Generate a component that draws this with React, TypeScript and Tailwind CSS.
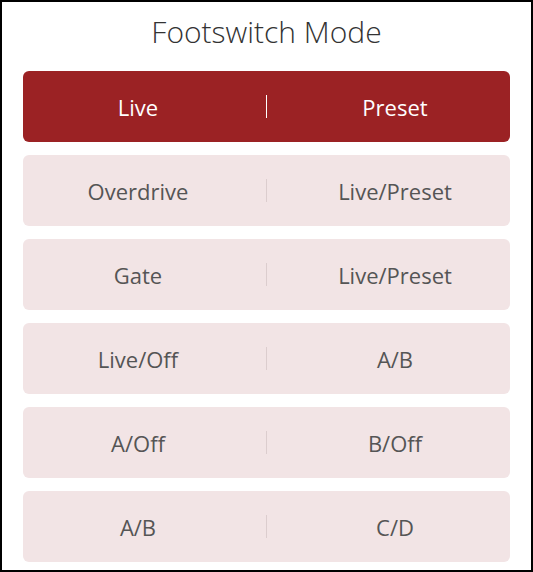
const rows: [string, string][] = [
  ["Live", "Preset"],
  ["Overdrive", "Live/Preset"],
  ["Gate", "Live/Preset"],
  ["Live/Off", "A/B"],
  ["A/Off", "B/Off"],
  ["A/B", "C/D"],
];

export default function App() {
  return (
    <div
      className="w-[533px] h-[572px] border-2 border-black bg-white px-[21px]"
      style={{ fontFamily: '"Open Sans", "Noto Sans", sans-serif' }}
    >
      <h1 className="pt-[10px] text-center text-[30px] font-light leading-[40px] text-[#333333]">
        Footswitch Mode
      </h1>
      <div className="mt-[19px] flex flex-col gap-[13px]">
        {rows.map(([left, right], i) => {
          const active = i === 0;
          return (
            <div
              key={i}
              className={`grid h-[71px] grid-cols-[1fr_1px_1fr] items-center gap-x-[13px] rounded-[6px] ${
                active ? "bg-[#9b2224] text-white" : "bg-[#f2e4e5] text-[#555555]"
              }`}
            >
              <span className="text-center text-[22px] leading-[30px]">{left}</span>
              <span className={`h-[23px] w-px ${active ? "bg-white" : "bg-[#dccdce]"}`} />
              <span className="text-center text-[22px] leading-[30px]">{right}</span>
            </div>
          );
        })}
      </div>
    </div>
  );
}
